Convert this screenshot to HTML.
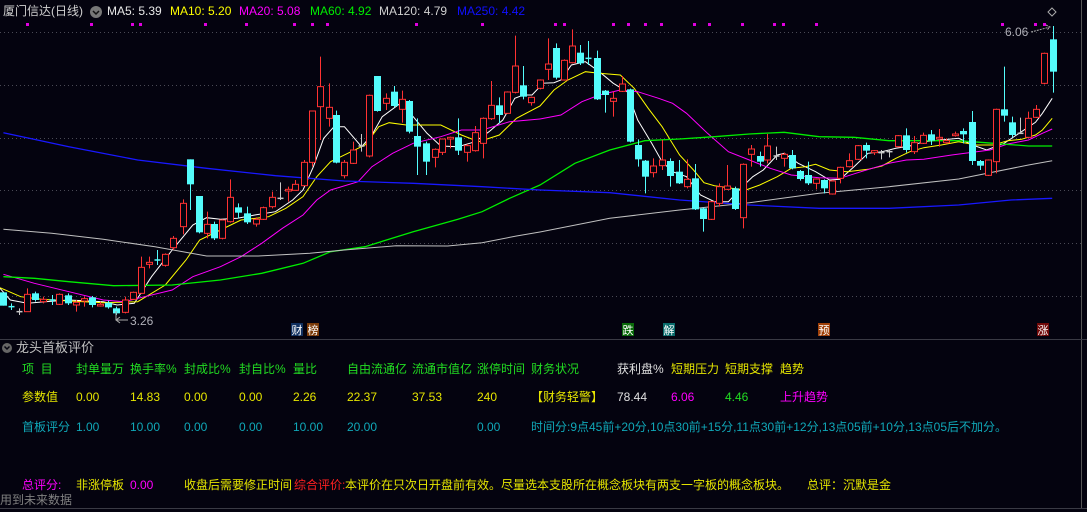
<!DOCTYPE html>
<html><head><meta charset="utf-8"><style>
html,body{margin:0;padding:0;background:#04030f;width:1087px;height:512px;overflow:hidden}
body{position:relative;font-family:"Liberation Sans","Noto Sans CJK SC",sans-serif;font-size:12px}
.t{position:absolute;white-space:nowrap;line-height:14px}
svg{position:absolute;left:0;top:0}
</style></head><body>
<svg id="s" width="1087" height="512" xmlns="http://www.w3.org/2000/svg">
<g stroke="#4a4a55" stroke-dasharray="1,3" stroke-width="1">
<line x1="0" y1="32.5" x2="1081" y2="32.5"/><line x1="0" y1="85.5" x2="1081" y2="85.5"/>
<line x1="0" y1="138.5" x2="1081" y2="138.5"/><line x1="0" y1="190.5" x2="1081" y2="190.5"/>
<line x1="0" y1="243.5" x2="1081" y2="243.5"/><line x1="0" y1="296.5" x2="1081" y2="296.5"/>
</g>
<line x1="1081.5" y1="0" x2="1081.5" y2="508" stroke="#555" />
<line x1="0" y1="339.5" x2="1087" y2="339.5" stroke="#3a3a44"/>
<line x1="0" y1="508.5" x2="1087" y2="508.5" stroke="#3a3a44"/>
<g id="lines" fill="none" stroke-width="1"></g>
<g id="cands"></g>
<g id="dots" fill="#e000e0"></g>
<path d="M1052 8 l4 4 -4 4 -4 -4z" fill="none" stroke="#aaa"/>
<text x="1005" y="36" fill="#b0b0b8" font-size="12" font-family="Liberation Sans">6.06</text>
<path d="M1031 32 L1050 27 M1046 25 l4 2 -3 3" stroke="#aaa" fill="none" stroke-dasharray="2,1"/>
<path d="M116 320 L128 320 M120 317 l-4 3 4 3 M116 311 L116 320" stroke="#aaa" fill="none"/>
<text x="130" y="325" fill="#b0b0b8" font-size="12" font-family="Liberation Sans">3.26</text>
<g font-size="11" font-family="Noto Sans CJK SC" text-anchor="middle">
<rect x="291" y="323" width="12" height="13" fill="#103060"/><text x="297" y="334" fill="#fff">财</text>
<rect x="307" y="323" width="12" height="13" fill="#7a3a08"/><text x="313" y="334" fill="#fff">榜</text>
<rect x="622" y="323" width="12" height="13" fill="#0a6a0a"/><text x="628" y="334" fill="#fff">跌</text>
<rect x="663" y="323" width="12" height="13" fill="#086a6a"/><text x="669" y="334" fill="#fff">解</text>
<rect x="818" y="323" width="12" height="13" fill="#a04008"/><text x="824" y="334" fill="#fff">预</text>
<rect x="1037" y="323" width="12" height="13" fill="#700808"/><text x="1043" y="334" fill="#fff">涨</text>
</g>
<circle cx="7" cy="348" r="5" fill="#666"/><path d="M4.5 346.5 l2.5 2.5 2.5 -2.5" stroke="#04030f" fill="none" stroke-width="1.5"/>
</svg>
<div class="t" style="left:3px;top:4px;color:#d0d0d0">厦门信达(日线)</div>
<svg width="1087" height="20" style="top:0"><circle cx="96" cy="12" r="6" fill="#777"/><path d="M93 11 l3 3 3 -3" stroke="#111" fill="none" stroke-width="1.5"/></svg>
<div class="t" style="left:107px;top:4px;color:#e8e8e8">MA5: 5.39</div>
<div class="t" style="left:170px;top:4px;color:#ffff00">MA10: 5.20</div>
<div class="t" style="left:239px;top:4px;color:#ff00ff">MA20: 5.08</div>
<div class="t" style="left:310px;top:4px;color:#00ee00">MA60: 4.92</div>
<div class="t" style="left:379px;top:4px;color:#d0d0d0">MA120: 4.79</div>
<div class="t" style="left:457px;top:4px;color:#1010ff">MA250: 4.42</div>

<div class="t" style="left:16px;top:341px;color:#c0c0c0;font-size:13px">龙头首板评价</div>
<div id="p"></div>
<div class="t" style="left:0;top:493px;color:#808080">用到未来数据</div>
<script>
function L(zx,right){return right?540+zx/2.866:zx/2.904}
function Y(zy){return 20+zy/3}
var left=[[8,817,857,817,857,'c'],[33,860,860,850,870,'c'],[55,875,875,865,885,'g'],[78,823,875,805,875,'r'],[102,820,840,815,845,'c'],[125,838,845,830,850,'r'],[150,840,840,825,855,'c'],[172,823,853,820,855,'r'],[198,826,850,820,855,'c'],[222,847,855,840,875,'r'],[245,836,843,830,860,'r'],[268,832,855,828,862,'c'],[290,853,858,845,860,'r'],[315,848,862,842,866,'c'],[338,865,880,860,885,'c'],[363,840,877,830,880,'r'],[387,817,838,815,840,'r'],[410,742,820,710,822,'r'],[433,727,733,710,745,'r'],[457,720,721,690,735,'c'],[480,703,736,700,740,'r'],[503,655,683,648,690,'r'],[530,550,620,538,643,'r'],[552,418,493,418,570,'c'],[577,528,637,528,640,'c'],[600,613,640,575,655,'r'],[622,612,655,605,660,'c'],[645,600,655,598,658,'r'],[669,532,605,478,608,'r'],[692,562,578,550,595,'c'],[718,580,607,560,612,'c'],[742,598,612,592,620,'r'],[765,563,598,560,600,'r'],[789,532,560,515,565,'r'],[812,535,536,487,540,'g'],[835,508,513,500,545,'r'],[858,493,511,480,512,'r'],[883,427,497,420,498,'r'],[907,273,427,272,440,'r'],[930,200,260,110,360,'r'],[954,262,295,190,320,'r'],[977,285,428,272,430,'c'],[1000,427,467,420,475,'r'],[1024,390,430,365,432,'r'],[1048,378,379,342,395,'g'],[1072,226,408,224,412,'r'],[1096,168,273,168,275,'c'],[1120,235,250,220,270,'r'],[1143,215,258,198,262,'c'],[1166,238,268,212,308,'r'],[1189,243,335,240,340,'c'],[1212,348,380,295,465,'c'],[1238,370,425,365,465,'c'],[1262,388,412,385,442,'r'],[1285,357,397,355,405,'r'],[1308,352,357,350,385,'r'],[1331,352,392,295,405,'c'],[1355,377,397,372,425,'r'],[1378,338,392,318,395,'r'],[1403,295,370,292,415,'r'],[1427,256,296,183,300,'r'],[1450,256,285,232,310,'c'],[1472,216,280,214,282,'r'],[1497,138,217,47,220,'r'],[1520,196,230,138,238,'c'],[1543,232,248,230,257,'r']];
var right=[[0,180,205,178,208,'r'],[23,132,148,55,180,'r'],[47,84,173,70,178,'c'],[70,121,180,118,182,'r'],[93,78,128,28,130,'r'],[116,98,130,75,135,'c'],[138,115,116,63,135,'c'],[162,114,238,92,240,'c'],[187,212,225,210,278,'c'],[210,235,244,215,290,'r'],[234,192,214,168,216,'r'],[257,208,365,206,367,'c'],[280,375,418,358,440,'c'],[302,422,470,420,520,'c'],[325,438,458,415,472,'r'],[350,420,437,360,450,'r'],[373,423,468,415,500,'c'],[397,455,490,420,492,'c'],[420,478,500,418,505,'r'],[443,475,568,432,570,'c'],[466,565,597,563,635,'c'],[489,545,598,543,600,'r'],[512,500,550,490,560,'r'],[537,498,508,435,510,'r'],[560,505,567,500,570,'c'],[583,433,593,430,625,'r'],[606,387,403,375,440,'r'],[630,408,425,395,440,'c'],[652,378,420,342,430,'r'],[676,408,409,380,420,'g'],[700,403,415,398,440,'r'],[723,405,445,390,448,'c'],[746,453,477,450,482,'c'],[769,465,490,425,495,'c'],[792,477,490,475,508,'r'],[815,480,505,478,520,'c'],[838,483,522,480,524,'r'],[860,442,475,440,490,'r'],[886,422,440,400,442,'r'],[910,377,418,375,420,'r'],[933,375,392,368,415,'c'],[956,392,398,390,405,'r'],[978,398,399,390,418,'g'],[1000,395,396,388,412,'g'],[1025,347,380,345,382,'r'],[1050,346,390,325,398,'c'],[1073,368,395,348,402,'r'],[1097,346,370,338,372,'r'],[1120,343,362,330,375,'c'],[1143,352,357,327,380,'r'],[1165,362,368,355,372,'r'],[1188,342,347,335,350,'r'],[1212,333,343,325,370,'c'],[1237,306,423,273,435,'c'],[1260,423,437,420,450,'c'],[1283,420,466,418,468,'r'],[1306,268,425,266,460,'r'],[1329,268,287,140,305,'c'],[1352,307,345,290,352,'c'],[1375,340,341,293,342,'g'],[1399,295,352,275,354,'r'],[1422,268,292,255,294,'r'],[1445,100,190,98,193,'r'],[1469,58,155,18,218,'c']];
var cg=document.getElementById('cands'),h='';
function draw(arr,r){arr.forEach(function(d){var x=Math.round(L(d[0],r))+0.5,t=Y(d[1]),b=Y(d[2]),wt=Y(d[3]),wb=Y(d[4]);var col=d[5]=='r'?'#ff3232':d[5]=='c'?'#54fcfc':'#c8c8c8';
h+='<line x1="'+x+'" y1="'+wt+'" x2="'+x+'" y2="'+wb+'" stroke="'+col+'"/>';
if(b-t<1.5){h+='<line x1="'+(x-3)+'" y1="'+t+'" x2="'+(x+3)+'" y2="'+t+'" stroke="'+col+'" stroke-width="1.5"/>';}
else if(d[5]=='r'){h+='<rect x="'+(x-3)+'" y="'+t+'" width="6" height="'+(b-t)+'" fill="#04030f" stroke="'+col+'"/>';}
else{h+='<rect x="'+(x-3.5)+'" y="'+t+'" width="7" height="'+(b-t)+'" fill="'+col+'"/>';}});}
draw(left,false);draw(right,true);
var ma={'#ffffff':[[[0,805],[30,840],[80,850],[130,845],[200,840],[300,845],[340,855],[390,850],[440,770],[500,690],[560,615],[600,593],[640,598],[690,595],[740,585],[800,575],[850,540],[880,510],[910,440],[940,355],[970,320],[1000,320],[1050,380],[1080,345],[1110,290],[1165,248],[1200,290],[1240,340],[1280,378],[1330,380],[1380,365],[1420,335],[1460,300],[1495,235],[1520,225],[1545,225],[1568,200]],[[0,190],[40,188],[60,180],[90,135],[130,125],[170,155],[210,190],[250,215],[280,300],[320,370],[350,425],[380,455],[420,470],[460,525],[500,545],[540,545],[580,500],[610,470],[640,450],[680,405],[700,400],[740,430],[790,455],[830,480],[860,478],[900,440],[940,400],[980,395],[1020,385],[1060,378],[1100,365],[1150,360],[1200,355],[1240,375],[1280,390],[1330,370],[1380,335],[1420,307],[1440,280],[1468,235]]],
'#ffff00':[[[0,803],[60,830],[120,838],[200,843],[300,848],[400,845],[480,795],[540,720],[580,660],[640,630],[700,600],[780,590],[830,565],[880,530],[920,470],[960,425],[1010,400],[1060,375],[1100,320],[1130,308],[1180,315],[1280,315],[1340,345],[1390,365],[1450,345],[1500,295],[1568,258]],[[0,258],[40,210],[80,180],[130,155],[170,160],[230,165],[270,205],[310,265],[350,320],[400,405],[440,450],[470,488],[500,497],[550,505],[590,510],[630,495],[680,470],[720,445],[760,440],[790,433],[830,450],[880,455],[940,448],[980,438],[1020,415],[1060,395],[1100,383],[1150,375],[1200,365],[1250,375],[1300,375],[1340,362],[1380,358],[1420,345],[1440,330],[1468,295]]],
'#ff00ff':[[[10,763],[100,790],[200,815],[300,840],[360,845],[420,830],[500,810],[560,770],[640,740],[700,710],[760,670],[820,625],[880,585],[920,540],[960,510],[1040,485],[1080,440],[1140,400],[1200,370],[1280,350],[1340,330],[1400,330],[1480,305],[1568,297]],[[0,297],[60,285],[120,245],[170,225],[230,210],[280,215],[340,235],[380,250],[420,280],[480,340],[540,395],[600,420],[660,445],[720,465],[800,473],[860,475],[920,455],[1000,430],[1050,420],[1100,418],[1180,405],[1240,397],[1290,390],[1340,372],[1400,360],[1440,340],[1468,327]]],
'#00ee00':[[[10,770],[100,775],[200,785],[330,797],[500,795],[640,780],[760,760],[880,730],[960,695],[1060,680],[1200,635],[1330,598],[1400,575],[1480,535],[1568,495]],[[0,495],[100,430],[200,390],[300,362],[400,357],[500,350],[600,342],[700,337],[800,350],[900,352],[1000,362],[1100,362],[1200,362],[1300,370],[1400,378],[1468,378]]],
'#c0c0c0':[[[10,628],[150,640],[300,658],[450,680],[600,708],[750,708],[900,700],[1000,690],[1150,677],[1300,678],[1400,668],[1500,648],[1568,636]],[[0,636],[200,595],[400,570],[600,548],[800,520],[1000,500],[1200,477],[1400,435],[1468,422]]],
'#1818ff':[[[10,338],[200,380],[400,420],[600,445],[800,467],[1000,483],[1200,490],[1400,500],[1568,510]],[[0,510],[200,518],[400,540],[600,555],[800,565],[1000,565],[1200,555],[1350,540],[1468,535]]]};
var lh='';for(var c in ma){var pts=ma[c][0].map(function(p){return L(p[0],false).toFixed(1)+','+Y(p[1]).toFixed(1)}).concat(ma[c][1].map(function(p){return L(p[0],true).toFixed(1)+','+Y(p[1]).toFixed(1)}));lh+='<polyline points="'+pts.join(' ')+'" stroke="'+c+'"'+(c=='#1818ff'||c=='#00ee00'?' stroke-width="1.3"':'')+'/>';}
document.getElementById('lines').innerHTML=lh;
cg.innerHTML=h;
var dx=[27,91,132,140,205,246,294,312,327,416,482,555,564,613,628,645,661,694,709,742,774,783,816,1002,1035,1044],dh='';
dx.forEach(function(x){dh+='<rect x="'+(x-1)+'" y="23" width="3" height="3"/>'});document.getElementById('dots').innerHTML=dh;
var G='#22dd22',Yc='#e6e600',T='#10a8b8',M='#ff00ff';
var rows=[[369,[[22,'项&nbsp;&nbsp;目',G],[76,'封单量万',G],[130,'换手率%',G],[184,'封成比%',G],[239,'封自比%',G],[293,'量比',G],[347,'自由流通亿',G],[412,'流通市值亿',G],[477,'涨停时间',G],[531,'财务状况',G],[617,'获利盘%','#e0e0e0'],[671,'短期压力',Yc],[725,'短期支撑',Yc],[780,'趋势',Yc]]],
[397,[[22,'参数值',Yc],[76,'0.00',Yc],[130,'14.83',Yc],[184,'0.00',Yc],[239,'0.00',Yc],[293,'2.26',Yc],[347,'22.37',Yc],[412,'37.53',Yc],[477,'240',Yc],[531,'【财务轻警】',Yc],[617,'78.44','#e0e0e0'],[671,'6.06',M],[725,'4.46','#22dd22'],[780,'上升趋势',M]]],
[427,[[22,'首板评分',T],[76,'1.00',T],[130,'10.00',T],[184,'0.00',T],[239,'0.00',T],[293,'10.00',T],[347,'20.00',T],[477,'0.00',T],[531,'时间分:9点45前+20分,10点30前+15分,11点30前+12分,13点05前+10分,13点05后不加分。',T]]],
[485,[[22,'总评分:',M],[76,'非涨停板',Yc],[130,'0.00',M],[184,'收盘后需要修正时间',Yc],[294,'综合评价:','#ff2020'],[345,'本评价在只次日开盘前有效。尽量选本支股所在概念板块有两支一字板的概念板块。',Yc],[807,'总评：沉默是金',Yc]]]];
var ph='';rows.forEach(function(r){r[1].forEach(function(c){ph+='<div class="t" style="left:'+c[0]+'px;top:'+(r[0]-7)+'px;color:'+c[2]+'">'+c[1]+'</div>'})});
document.getElementById('p').innerHTML=ph;
</script>
</body></html>
